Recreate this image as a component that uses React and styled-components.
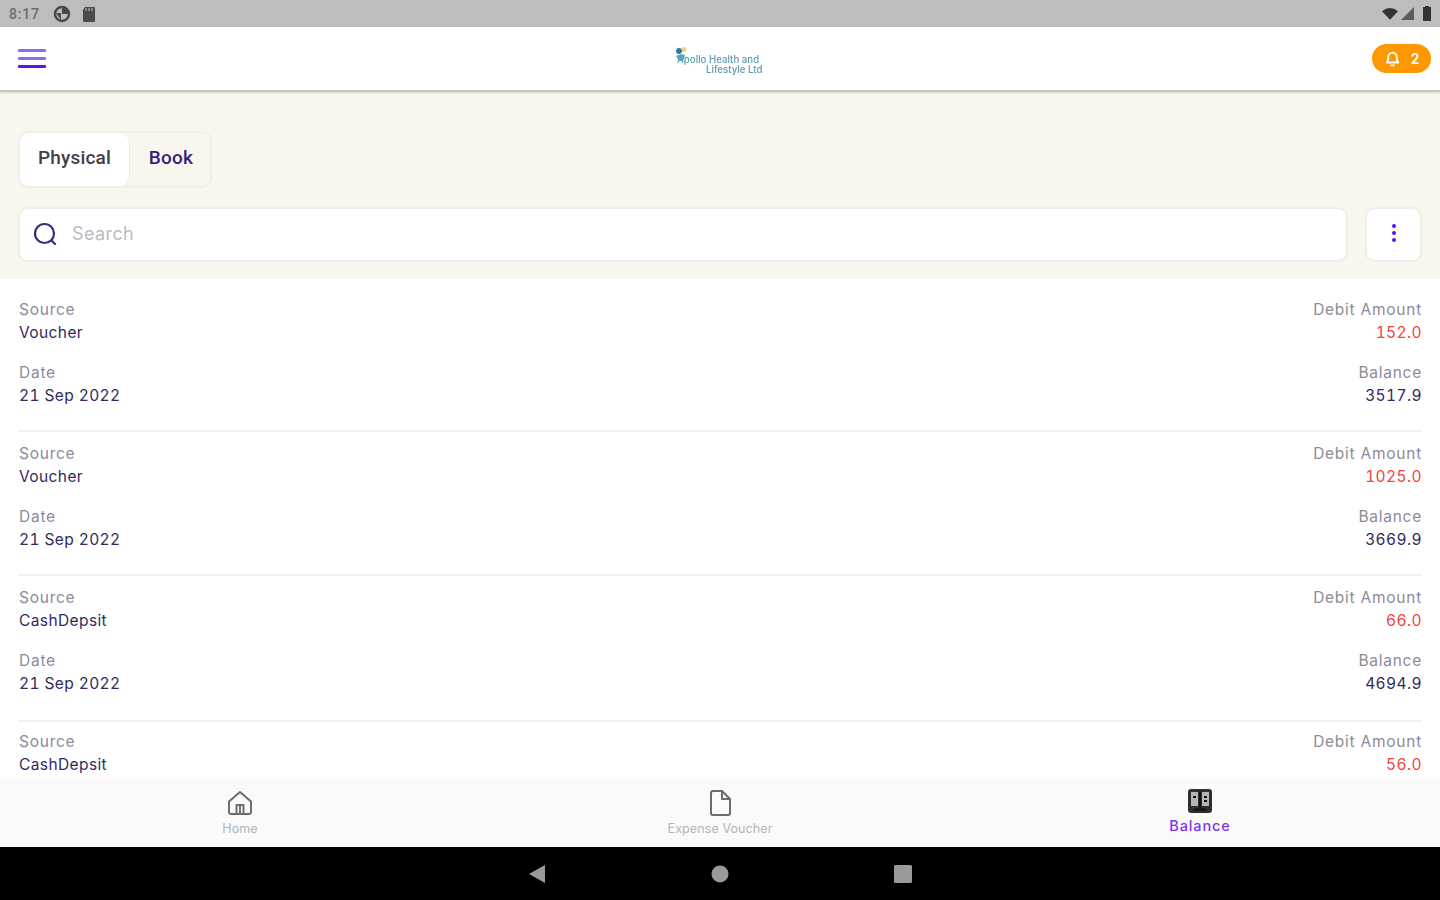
import React from 'react';
import styled, { createGlobalStyle } from 'styled-components';

const GlobalStyle = createGlobalStyle`
  html, body { margin: 0; padding: 0; height: 100%; background: #fff; overflow: hidden; }
  body { font-family: Inter, "Noto Sans", sans-serif; }
  * { box-sizing: border-box; }
`;

const Screen = styled.div`
  width: 1440px;
  height: 900px;
  display: flex;
  flex-direction: column;
  overflow: hidden;
  filter: blur(0.6px);
`;

const StatusBar = styled.div`
  height: 27px;
  flex: none;
  background: #bdbdbd;
  display: flex;
  align-items: center;
  justify-content: space-between;
  padding: 0 9px 0 9px;
  color: #5f5f5f;
`;
const StatusGroup = styled.div`
  display: flex;
  align-items: center;
  gap: ${(p) => p.$gap || 6}px;
`;
const Clock = styled.span`
  font: 500 14px Roboto, sans-serif;
  letter-spacing: 0.8px;
  margin-right: 5px;
  color: #6d6d6d;
`;

const Header = styled.header`
  height: 65px;
  flex: none;
  background: #fff;
  display: flex;
  align-items: center;
  justify-content: space-between;
  padding: 0 9px 1px 18px;
  border-bottom: 2px solid #c4c3be;
  box-shadow: 0 1px 2px rgba(0, 0, 0, 0.12);
  position: relative;
`;
const Burger = styled.div`
  width: 28px;
  display: flex;
  flex-direction: column;
  gap: 5px;
  span {
    height: 3px;
    background: #9566ff;
    border-radius: 1px;
  }
  span:last-child { background: #5a14f0; }
`;
const Logo = styled.div`
  position: absolute;
  left: 674px;
  top: 18px;
  width: 92px;
  height: 34px;
`;
const LogoLine = styled.div`
  position: absolute;
  white-space: nowrap;
  font: 500 9.7px Inter, sans-serif;
  color: #5c9dae;
  top: ${(p) => p.$top}px;
  left: ${(p) => p.$left}px;
`;
const Bell = styled.div`
  width: 59px;
  height: 29px;
  margin-top: 1px;
  border-radius: 15px;
  background: #ff9800;
  color: #fff;
  display: flex;
  align-items: center;
  justify-content: center;
  gap: 10px;
  font: 700 14px Inter, sans-serif;
`;

const FilterArea = styled.section`
  height: 187px;
  flex: none;
  background: #f9f6f0;
  padding: 39px 18px 0;
`;
const Tabs = styled.div`
  width: 194px;
  height: 57px;
  display: flex;
  border: 2px solid #f1eee9;
  border-radius: 10px;
`;
const Tab = styled.div`
  height: 100%;
  display: flex;
  align-items: center;
  justify-content: center;
  padding-bottom: 4px;
  font: 500 19px Roboto, sans-serif;
  letter-spacing: 0.2px;
  width: ${(p) => (p.$active ? 109 : 84)}px;
  flex: none;
  background: ${(p) => (p.$active ? '#fff' : 'transparent')};
  color: ${(p) => (p.$active ? '#3f3f46' : '#3b1d78')};
  border-radius: ${(p) => (p.$active ? '9px' : '0')};
  box-shadow: ${(p) => (p.$active ? '1px 0 1px #eeebe6' : 'none')};
`;
const SearchRow = styled.div`
  display: flex;
  gap: 17px;
  margin-top: 19px;
`;
const SearchBox = styled.div`
  flex: 1;
  height: 55px;
  background: #fff;
  border: 2px solid #f1eee9;
  border-radius: 10px;
  display: flex;
  align-items: center;
  gap: 14px;
  padding: 0 0 2px 12px;
  font: 400 18px Inter, sans-serif;
  letter-spacing: 0.4px;
  color: #bdbac4;
`;
const MoreButton = styled.div`
  width: 57px;
  height: 55px;
  padding-bottom: 3px;
  background: #fff;
  border: 2px solid #f1eee9;
  border-radius: 10px;
  display: flex;
  flex-direction: column;
  align-items: center;
  justify-content: center;
  gap: 3px;
  span {
    width: 4px;
    height: 4px;
    border-radius: 50%;
    background: #5a14f0;
  }
`;

const List = styled.main`
  flex: 1;
  min-height: 0;
  overflow: hidden;
  background: #fff;
  padding: 19px 18px 0;
`;
const Entry = styled.div`
  height: 144px;
  display: flex;
  justify-content: space-between;
  position: relative;
  padding-left: 1px;
  &:not(:last-child)::after {
    content: '';
    position: absolute;
    left: 0;
    right: 0;
    top: 132px;
    height: 2px;
    background: #f3f3f3;
  }
  &:nth-child(3)::after { top: 134px; }
`;
const Column = styled.div`
  display: flex;
  flex-direction: column;
  align-items: ${(p) => (p.$right ? 'flex-end' : 'flex-start')};
`;
const Label = styled.div`
  font: 400 15.5px/23px Inter, sans-serif;
  letter-spacing: 0.75px;
  color: #8d8a9c;
`;
const Value = styled.div`
  font: 400 15.5px/23px Inter, sans-serif;
  font-variant-numeric: tabular-nums;
  letter-spacing: 0.4px;
  color: ${(p) => (p.$debit ? '#f0443e' : '#332a5e')};
  margin-bottom: 17px;
`;

const BottomNav = styled.nav`
  height: 70px;
  flex: none;
  background: #fafafa;
  display: grid;
  grid-template-columns: repeat(3, 1fr);
`;
const NavItem = styled.div`
  display: flex;
  flex-direction: column;
  align-items: center;
  padding-top: ${(p) => (p.$active ? 10 : 12)}px;
  gap: ${(p) => (p.$active ? 4 : 5)}px;
  line-height: 14px;
  color: ${(p) => (p.$active ? '#8133f1' : '#b5b5b5')};
  font-family: Inter, sans-serif;
  font-size: ${(p) => (p.$active ? 14.5 : 12.5)}px;
  font-weight: ${(p) => (p.$active ? 500 : 400)};
  letter-spacing: ${(p) => (p.$active ? 0.9 : 0.1)}px;
  svg { color: #6d6d6d; }
`;

const SystemNav = styled.div`
  height: 53px;
  flex: none;
  background: #000;
  display: flex;
  align-items: center;
  justify-content: center;
  gap: 165px;
`;

const entries = [
  { source: 'Voucher', amount: '152.0', balance: '3517.9' },
  { source: 'Voucher', amount: '1025.0', balance: '3669.9' },
  { source: 'CashDepsit', amount: '66.0', balance: '4694.9' },
  { source: 'CashDepsit', amount: '56.0' },
];

const App = () => (
  <Screen>
    <GlobalStyle />
    <StatusBar>
      <StatusGroup $gap={8}>
        <Clock>8:17</Clock>
        <svg width="18" height="18" viewBox="0 0 18 18">
          <circle cx="9" cy="9" r="7" fill="none" stroke="#4a4a4a" strokeWidth="2.5" />
          <path d="M9 2a7 7 0 0 1 7 7H9z" fill="#4a4a4a" />
          <path d="M3 8h5v7z" fill="#4a4a4a" />
        </svg>
        <svg width="14" height="16" viewBox="0 0 14 16" style={{ marginLeft: 3 }}>
          <path d="M3 1h9a1 1 0 0 1 1 1v13a1 1 0 0 1-1 1H2a1 1 0 0 1-1-1V4z" fill="#4a4a4a" />
          <path d="M4 2v3M7 2v3M10 2v3" stroke="#bdbdbd" strokeWidth="1" />
        </svg>
      </StatusGroup>
      <StatusGroup $gap={3}>
        <svg width="16" height="13" viewBox="0 0 18 14">
          <path d="M0 4.5Q9-3 18 4.5L9 14z" fill="#333" />
        </svg>
        <svg width="13" height="13" viewBox="0 0 14 14">
          <path d="M14 0v14H0z" fill="#5c5c5c" />
        </svg>
        <svg width="8" height="15" viewBox="0 0 8 15" style={{ marginLeft: 6 }}>
          <path d="M2 1V0h4v1h2v14H0V1z" fill="#333" />
        </svg>
      </StatusGroup>
    </StatusBar>

    <Header>
      <Burger>
        <span />
        <span />
        <span />
      </Burger>
      <Logo>
        <svg width="24" height="14" viewBox="0 0 24 14">
          <circle cx="10" cy="2.5" r="2.5" fill="#f2d27a" />
          <circle cx="5" cy="4" r="3" fill="#2f78a6" />
          <path d="M2 9c4-2 7-2 9-1l-2 6H5z" fill="#5aa9bd" />
        </svg>
        <LogoLine $top={9} $left={3}>Apollo Health and</LogoLine>
        <LogoLine $top={19} $left={32}>Lifestyle Ltd</LogoLine>
      </Logo>
      <Bell>
        <svg width="17" height="18" viewBox="0 0 24 24" fill="none" stroke="#fff" strokeWidth="2.8" strokeLinecap="round" strokeLinejoin="round">
          <path d="M6 9a6 6 0 0 1 12 0c0 6 2 8 2 8H4s2-2 2-8" />
          <path d="M10 21h4" />
        </svg>
        <span>2</span>
      </Bell>
    </Header>

    <FilterArea>
      <Tabs>
        <Tab $active>Physical</Tab>
        <Tab>Book</Tab>
      </Tabs>
      <SearchRow>
        <SearchBox>
          <svg width="26" height="26" viewBox="0 0 26 26" fill="none" stroke="#3b2a78" strokeWidth="2.2" strokeLinecap="round">
            <circle cx="12.5" cy="12.5" r="9.5" />
            <path d="M20 20l3 3" />
          </svg>
          Search
        </SearchBox>
        <MoreButton>
          <span />
          <span />
          <span />
        </MoreButton>
      </SearchRow>
    </FilterArea>

    <List>
      {entries.map((e, i) => (
        <Entry key={i}>
          <Column>
            <Label>Source</Label>
            <Value>{e.source}</Value>
            {e.balance && (
              <>
                <Label>Date</Label>
                <Value>21 Sep 2022</Value>
              </>
            )}
          </Column>
          <Column $right>
            <Label>Debit Amount</Label>
            <Value $debit>{e.amount}</Value>
            {e.balance && (
              <>
                <Label>Balance</Label>
                <Value>{e.balance}</Value>
              </>
            )}
          </Column>
        </Entry>
      ))}
    </List>

    <BottomNav>
      <NavItem>
        <svg width="28" height="28" viewBox="0 0 28 28" fill="none" stroke="currentColor" strokeWidth="2" strokeLinejoin="round">
          <path d="M3 12.5L14 3l11 9.5V23a2 2 0 0 1-2 2H5a2 2 0 0 1-2-2z" />
          <path d="M10.5 25v-9h7v9M14 16v9" />
        </svg>
        Home
      </NavItem>
      <NavItem>
        <svg width="28" height="28" viewBox="0 0 28 28" fill="none" stroke="currentColor" strokeWidth="2" strokeLinejoin="round">
          <path d="M5 4a2 2 0 0 1 2-2h9l8 8v14a2 2 0 0 1-2 2H7a2 2 0 0 1-2-2z" />
          <path d="M16 2v8h8" />
        </svg>
        Expense Voucher
      </NavItem>
      <NavItem $active>
        <svg width="28" height="28" viewBox="0 0 28 28">
          <rect x="2" y="2" width="24" height="24" rx="3" fill="#2e2e2e" />
          <rect x="5" y="5" width="7" height="14" fill="#b4b4b4" />
          <rect x="16" y="5" width="7" height="14" fill="#b4b4b4" />
          <path d="M14 4v17M8 22.5h12M7 10h3M18 10h3M18 14h3" stroke="#111" strokeWidth="2" />
        </svg>
        Balance
      </NavItem>
    </BottomNav>

    <SystemNav>
      <svg width="18" height="20" viewBox="0 0 18 20">
        <path d="M17 1v18L1 10z" fill="#9a9a9a" />
      </svg>
      <svg width="18" height="18" viewBox="0 0 18 18">
        <circle cx="9" cy="9" r="8.5" fill="#9a9a9a" />
      </svg>
      <svg width="18" height="18" viewBox="0 0 18 18">
        <rect width="18" height="18" rx="1.5" fill="#9a9a9a" />
      </svg>
    </SystemNav>
  </Screen>
);

export default App;
